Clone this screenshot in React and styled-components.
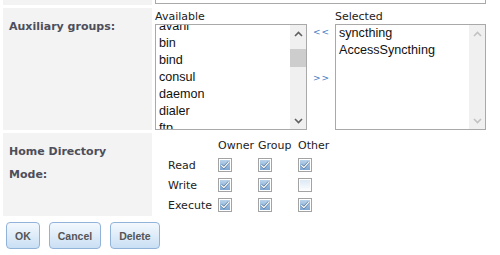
import React from 'react'
import styled, { createGlobalStyle } from 'styled-components'

const available = ['avahi', 'bin', 'bind', 'consul', 'daemon', 'dialer', 'ftp', 'games']
const selected = ['syncthing', 'AccessSyncthing']

const perms = [
    { name: 'Read', bits: [true, true, true] },
    { name: 'Write', bits: [true, true, false] },
    { name: 'Execute', bits: [true, true, true] },
]

const Chevron = ({ up, color }) => (
    <svg width="9" height="6" viewBox="0 0 9 6">
        <path
            d={up ? 'M1 5 L4.5 1.5 L8 5' : 'M1 1 L4.5 4.5 L8 1'}
            fill="none"
            stroke={color}
            strokeWidth="1.6"
        />
    </svg>
)

const CheckBox = ({ checked }) => (
    <svg width="14" height="14" viewBox="0 0 14 14">
        <defs>
            <linearGradient id="cbOn" x1="0" y1="0" x2="0" y2="1">
                <stop offset="0" stopColor="#b9d3ec" />
                <stop offset="1" stopColor="#7ea7d2" />
            </linearGradient>
            <linearGradient id="cbOff" x1="0" y1="0" x2="0" y2="1">
                <stop offset="0" stopColor="#dce9f4" />
                <stop offset="1" stopColor="#fbfcfe" />
            </linearGradient>
        </defs>
        <rect x="0.5" y="0.5" width="13" height="13" fill="#fff" stroke="#a3a3a3" />
        <rect x="2" y="2" width="10" height="10" fill={checked ? 'url(#cbOn)' : 'url(#cbOff)'} />
        {checked && (
            <>
                <path d="M3.2 7.2 L5.8 9.6 L10.8 4.2" fill="none" stroke="#3d6590" strokeWidth="2.4" />
                <path d="M3.2 7.2 L5.8 9.6 L10.8 4.2" fill="none" stroke="#fff" strokeWidth="1.3" />
            </>
        )}
    </svg>
)

const ListBox = ({ items, offset, thumb, disabled }) => (
    <Box>
        <Items style={{ marginTop: offset }}>
            {items.map(i => <Item key={i}>{i}</Item>)}
        </Items>
        <ScrollBar>
            <ArrowCell><Chevron up color={disabled ? '#c2c2c2' : '#606060'} /></ArrowCell>
            <Track>{thumb && <Thumb />}</Track>
            <ArrowCell><Chevron color={disabled ? '#c2c2c2' : '#606060'} /></ArrowCell>
        </ScrollBar>
    </Box>
)

const App = () => {
    return (
        <>
            <GlobalStyle />
            <Form>
                <LabelCell />
                <InputCell>
                    <TextInput />
                </InputCell>

                <LabelCell>Auxiliary groups:</LabelCell>
                <GroupCell>
                    <ListColumn $width="152px">
                        <Caption>Available</Caption>
                        <ListBox items={available} offset="-7px" thumb />
                    </ListColumn>
                    <Movers>
                        <Mover>&lt;&lt;</Mover>
                        <Mover>&gt;&gt;</Mover>
                    </Movers>
                    <ListColumn $width="151px">
                        <Caption>Selected</Caption>
                        <ListBox items={selected} offset="0" disabled />
                    </ListColumn>
                </GroupCell>

                <LabelCell>Home Directory Mode:</LabelCell>
                <ModeCell>
                    <ModeTable>
                        <thead>
                            <tr>
                                <th />
                                <th>Owner</th>
                                <th>Group</th>
                                <th>Other</th>
                            </tr>
                        </thead>
                        <tbody>
                            {perms.map(p => (
                                <tr key={p.name}>
                                    <td>{p.name}</td>
                                    {p.bits.map((b, i) => (
                                        <td key={i}><CheckBox checked={b} /></td>
                                    ))}
                                </tr>
                            ))}
                        </tbody>
                    </ModeTable>
                </ModeCell>
            </Form>
            <Buttons>
                <Button>OK</Button>
                <Button>Cancel</Button>
                <Button>Delete</Button>
            </Buttons>
        </>
    )
}

export default App


const GlobalStyle = createGlobalStyle`
body {
    margin: 0;
    background: #fff;
    font-family: "DejaVu Sans", Verdana, sans-serif;
    font-size: 11px;
    color: #222;
    overflow: hidden;
}
`
const Form = styled.div`
display: grid;
grid-template-columns: 149px 331px;
grid-template-rows: 26px 122px 83px;
gap: 3px 3px;
padding-left: 3px;
margin-top: -21px;
`
const LabelCell = styled.div`
background: #f3f3f3;
padding: 7px 6px;
font-weight: bold;
font-size: 11px;
line-height: 23px;
color: #4e4e5a;
`
const InputCell = styled.div`
display: flex;
align-items: flex-end;
padding-bottom: 1px;
`
const TextInput = styled.div`
width: 100%;
height: 22px;
box-sizing: border-box;
border: 1px solid #a9a9a9;
`
const GroupCell = styled.div`
display: flex;
padding-top: 1px;
`
const ListColumn = styled.div`
width: ${p => p.$width};
display: flex;
flex-direction: column;
`
const Caption = styled.div`
height: 15px;
line-height: 16px;
font-size: 11px;
color: #222;
`
const Box = styled.div`
height: 106px;
box-sizing: border-box;
border: 1px solid #a9a9a9;
overflow: hidden;
display: flex;
background: #fff;
`
const Items = styled.div`
flex: 1;
padding-left: 3px;
`
const Item = styled.div`
font-family: "Liberation Sans", Arial, sans-serif;
font-size: 12.6px;
line-height: 17px;
height: 17px;
color: #111;
`
const ScrollBar = styled.div`
width: 16px;
background: #f0f0f0;
display: flex;
flex-direction: column;
`
const ArrowCell = styled.div`
height: 17px;
display: flex;
align-items: center;
justify-content: center;
`
const Track = styled.div`
flex: 1;
padding-top: 7px;
`
const Thumb = styled.div`
height: 18px;
background: #cdcdcd;
`
const Movers = styled.div`
width: 28px;
display: flex;
flex-direction: column;
gap: 37px;
padding: 19px 0 0 6px;
box-sizing: border-box;
`
const Mover = styled.span`
font-size: 9px;
line-height: 9px;
color: #3f7cc5;
letter-spacing: 1px;
`
const ModeCell = styled.div`
padding: 2px 0 0 11px;
`
const ModeTable = styled.table`
border-collapse: collapse;

th, td {
    padding: 0 0 0 2px;
    height: 20px;
    text-align: left;
    font-weight: normal;
    font-size: 11px;
    color: #222;
    vertical-align: middle;
    white-space: nowrap;
}
th:first-child, td:first-child {
    width: 48px;
}
th:not(:first-child), td:not(:first-child) {
    width: 38px;
}
td svg {
    display: block;
}
`
const Buttons = styled.div`
display: flex;
gap: 9px;
padding: 6px 0 0 6px;
`
const Button = styled.button`
height: 27px;
padding: 0 8px;
border: 1px solid #92b3d9;
border-radius: 4px;
background: linear-gradient(#f3f8fd, #cadff4);
font-family: "Liberation Sans", Arial, sans-serif;
font-weight: bold;
font-size: 10.5px;
color: #555;
`
